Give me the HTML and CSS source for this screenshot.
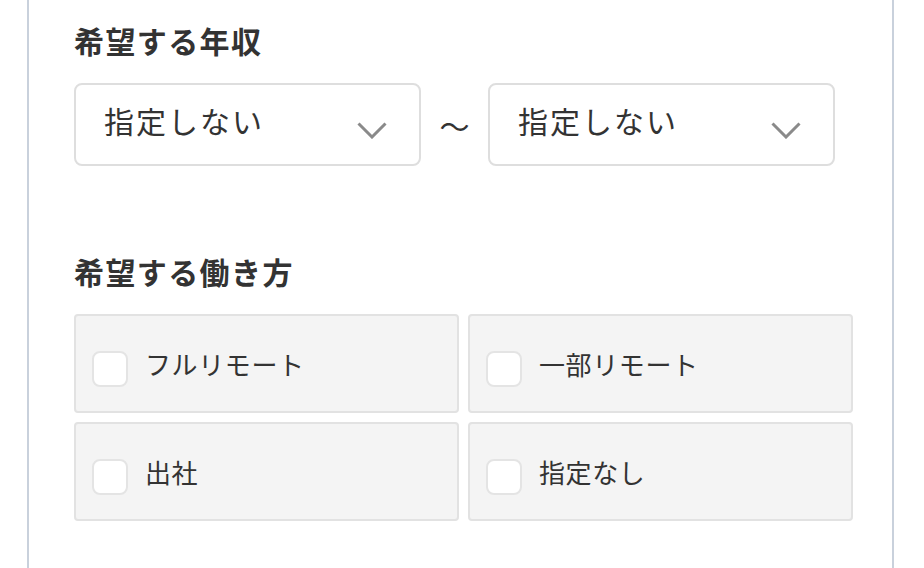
FILE: index.html
```html
<!DOCTYPE html>
<html lang="ja">
<head>
<meta charset="utf-8">
<link rel="stylesheet" href="styles.css">
</head>
<body>
<div class="panel">
  <section class="group salary">
    <h2 class="title">希望する年収</h2>
    <div class="range">
      <div class="select">
        <span class="select-text">指定しない</span>
        <svg class="chevron" width="30" height="17" viewBox="0 0 30 17"><path d="M1.5 1.5 L15 15 L28.5 1.5" fill="none" stroke="#8a8a8a" stroke-width="3"/></svg>
      </div>
      <span class="tilde">〜</span>
      <div class="select">
        <span class="select-text">指定しない</span>
        <svg class="chevron" width="30" height="17" viewBox="0 0 30 17"><path d="M1.5 1.5 L15 15 L28.5 1.5" fill="none" stroke="#8a8a8a" stroke-width="3"/></svg>
      </div>
    </div>
  </section>
  <section class="group style">
    <h2 class="title">希望する働き方</h2>
    <div class="options">
      <label class="option"><span class="box"></span><span class="label">フルリモート</span></label>
      <label class="option"><span class="box"></span><span class="label">一部リモート</span></label>
      <label class="option"><span class="box"></span><span class="label">出社</span></label>
      <label class="option"><span class="box"></span><span class="label">指定なし</span></label>
    </div>
  </section>
</div>
</body>
</html>
```
FILE: styles.css
```css
html, body {
  margin: 0;
  padding: 0;
  background: #ffffff;
}
body {
  font-family: "Noto Sans CJK JP", "Noto Sans", sans-serif;
  color: #333333;
}
.panel {
  box-sizing: border-box;
  margin-left: 27px;
  width: 867px;
  height: 568px;
  border-left: 2px solid #c9d1dc;
  border-right: 2px solid #c9d1dc;
  padding: 25px 0 0 45px;
}
.title {
  margin: 0;
  font-size: 30px;
  line-height: 30px;
  font-weight: 700;
  letter-spacing: 1.4px;
  color: #333333;
}
.range {
  display: flex;
  align-items: center;
  margin-top: 28px;
}
.select {
  box-sizing: border-box;
  width: 347px;
  height: 83px;
  border: 2px solid #dedede;
  border-radius: 8px;
  display: flex;
  align-items: center;
  justify-content: space-between;
  padding: 0 32px 0 28px;
}
.select-text {
  font-size: 30px;
  line-height: 30px;
  letter-spacing: 2px;
  margin-top: -10px;
  color: #333333;
}
.chevron {
  display: block;
  margin-top: 12px;
}
.tilde {
  width: 67px;
  text-align: center;
  font-size: 30px;
  line-height: 30px;
  margin-top: 0;
}
.style {
  margin-top: 90px;
}
.options {
  margin-top: 28px;
  display: grid;
  grid-template-columns: 385px 385px;
  grid-auto-rows: 99px;
  gap: 9px;
}
.option {
  box-sizing: border-box;
  background: #f4f4f4;
  border: 2px solid #e2e2e2;
  border-radius: 4px;
  display: flex;
  align-items: center;
  padding-left: 16px;
}
.box {
  box-sizing: border-box;
  width: 36px;
  height: 36px;
  background: #ffffff;
  border: 2px solid #e4e4e4;
  border-radius: 8px;
  flex: none;
  margin-top: 10px;
}
.label {
  margin-left: 17px;
  font-size: 26px;
  line-height: 26px;
  letter-spacing: 0.6px;
  color: #333333;
  margin-top: 0;
}
```
